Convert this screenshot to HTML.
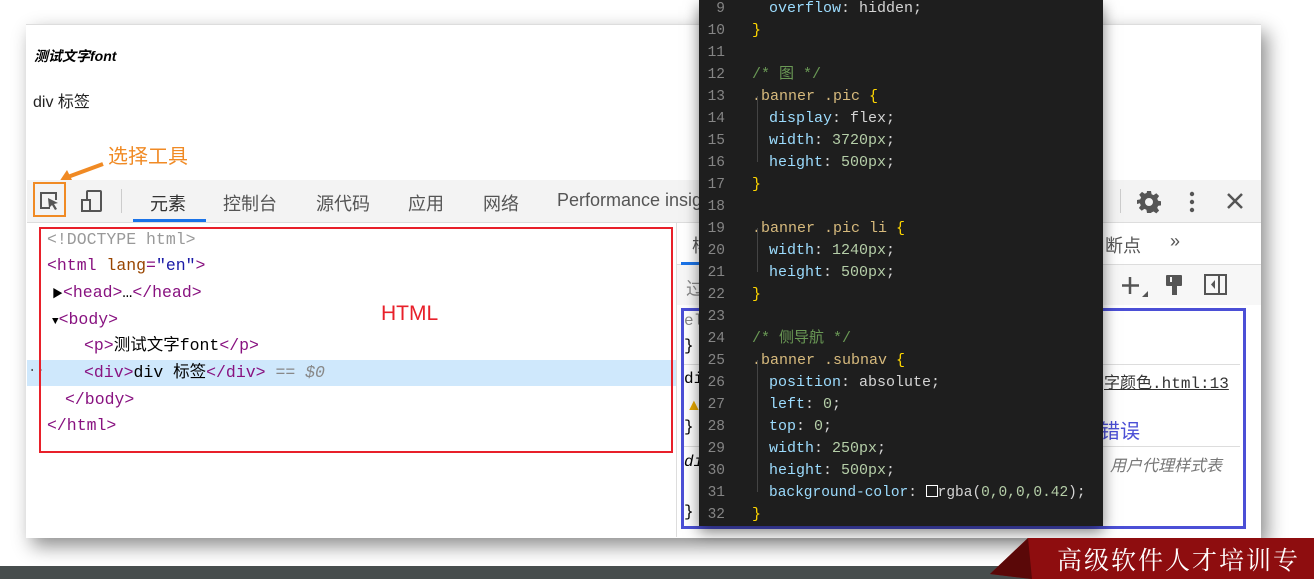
<!DOCTYPE html>
<html><head><meta charset="utf-8"><style>
body{margin:0;width:1314px;height:579px;position:relative;overflow:hidden;background:#fff;font-family:"Liberation Sans","Noto Sans CJK SC",sans-serif}
.a{position:absolute}
.win{left:26px;top:24px;width:1235px;height:513px;background:#fff;box-shadow:6px 8px 18px rgba(0,0,0,.45);border-top:1px solid #ddd}
.mono{font-family:"Liberation Mono","Noto Sans CJK SC",monospace}
.tr{left:47px;font-size:16.5px;white-space:pre;line-height:20px}
.tag{color:#881280}.at{color:#994500}.av{color:#1a1aa6}
.cd{left:699px;top:0;width:404px;height:526px;background:#1e1e1e;box-shadow:0 6px 14px rgba(0,0,0,.5)}
.ln{position:absolute;left:4px;width:22px;text-align:right;color:#858585;font-size:14.5px;line-height:20px}
.cl{position:absolute;left:53px;font-size:15px;line-height:20px;white-space:pre;color:#d4d4d4}
.p{color:#9cdcfe}.s{color:#d7ba7d}.b{color:#ffd700}.c{color:#6a9955}.n{color:#b5cea8}
.tab{top:190px;font-size:18px;color:#555}
</style></head><body>
<div class="a win"></div>
<div class="a" style="left:34px;top:46px;font-size:14px;font-weight:bold;font-style:italic">测试文字font</div>
<div class="a" style="left:33px;top:88px;font-size:16px;color:#222">div 标签</div>
<div class="a" style="left:108px;top:140px;font-size:20px;color:#f08a24">选择工具</div>
<svg class="a" style="left:55px;top:160px" width="55" height="25"><path d="M48 4 L10 18" stroke="#f08a24" stroke-width="4"/><path d="M4 22 L12 10 L18 22Z" fill="#f08a24"/></svg>
<div class="a" style="left:27px;top:180px;width:1234px;height:42px;background:#f3f3f3;border-bottom:1px solid #ddd"></div>
<div class="a" style="left:33px;top:182px;width:33px;height:35px;border:2px solid #f08a24;box-sizing:border-box"></div>
<svg class="a" style="left:38px;top:190px" width="24" height="24"><path d="M12 18H3V3h15v7" stroke="#555" stroke-width="2" fill="none"/><path d="M10 8l10 5-4 1 3 5-2 1-3-5-3 3z" fill="#555"/></svg>
<svg class="a" style="left:80px;top:189px" width="24" height="26"><rect x="7" y="2" width="14" height="20" rx="1" stroke="#555" stroke-width="2" fill="none"/><rect x="2" y="11" width="8" height="11" stroke="#555" stroke-width="2" fill="#f3f3f3"/></svg>
<div class="a" style="left:121px;top:189px;width:1px;height:24px;background:#ccc"></div>
<div class="a tab" style="left:150px;color:#333">元素</div>
<div class="a" style="left:133px;top:219px;width:73px;height:3px;background:#1a73e8"></div>
<div class="a tab" style="left:223px">控制台</div>
<div class="a tab" style="left:316px">源代码</div>
<div class="a tab" style="left:408px">应用</div>
<div class="a tab" style="left:483px">网络</div>
<div class="a tab" style="left:557px">Performance insig</div>
<div class="a" style="left:1120px;top:189px;width:1px;height:24px;background:#ccc"></div>
<svg class="a" style="left:1137px;top:190px" width="24" height="24" viewBox="0 0 24 24"><path fill="#555" d="M10 1h4l.6 3.2 2 .9 2.7-1.9 2.8 2.8-1.9 2.7.9 2 3.2.6v4l-3.2.6-.9 2 1.9 2.7-2.8 2.8-2.7-1.9-2 .9L14 23h-4l-.6-3.2-2-.9-2.7 1.9-2.8-2.8 1.9-2.7-.9-2L0 14v-4l3.2-.6.9-2L2.2 4.7l2.8-2.8 2.7 1.9 2-.9zM12 8a4 4 0 100 8 4 4 0 100-8z"/></svg>
<svg class="a" style="left:1188px;top:190px" width="8" height="24"><circle cx="4" cy="4" r="2.2" fill="#555"/><circle cx="4" cy="12" r="2.2" fill="#555"/><circle cx="4" cy="20" r="2.2" fill="#555"/></svg>
<svg class="a" style="left:1226px;top:192px" width="18" height="18"><path d="M2 2L16 16M16 2L2 16" stroke="#555" stroke-width="2.5"/></svg>
<div class="a" style="left:676px;top:223px;width:1px;height:314px;background:#ddd"></div>
<div class="a" style="left:677px;top:264px;width:584px;height:1px;background:#ddd"></div>
<div class="a" style="left:677px;top:265px;width:584px;height:40px;background:#f7f7f7"></div>
<div class="a" style="left:681px;top:262px;width:20px;height:3px;background:#1a73e8"></div>
<div class="a" style="left:692px;top:232px;font-size:18px;color:#555">样</div>
<div class="a" style="left:686px;top:275px;font-size:18px;color:#888">过</div>
<div class="a" style="left:1105px;top:232px;font-size:18px;color:#555">断点</div>
<div class="a" style="left:1170px;top:231px;font-size:18px;color:#555">»</div>
<svg class="a" style="left:1120px;top:275px" width="30" height="24"><path d="M10 2v17M2 10.5h17" stroke="#555" stroke-width="2.5"/><path d="M28 16v6h-6z" fill="#555"/></svg>
<svg class="a" style="left:1164px;top:274px" width="22" height="24"><rect x="2" y="1" width="16" height="11" rx="1" fill="#555"/><rect x="6" y="3" width="2" height="5" fill="#f7f7f7"/><rect x="8" y="12" width="5" height="9" fill="#555"/></svg>
<svg class="a" style="left:1204px;top:274px" width="24" height="22"><rect x="1" y="1" width="21" height="19" stroke="#555" stroke-width="2" fill="none"/><path d="M15 1v19" stroke="#555" stroke-width="2"/><path d="M11 6v9l-4-4.5z" fill="#555"/></svg>
<div class="a" style="left:681px;top:308px;width:559px;height:215px;border:3px solid #4b4fd6"></div>
<div class="a" style="left:684px;top:364px;width:556px;height:1px;background:#ddd"></div>
<div class="a" style="left:684px;top:446px;width:556px;height:1px;background:#ddd"></div>
<div class="a mono" style="left:684px;top:312px;font-size:16px;color:#888">el</div>
<div class="a mono" style="left:684px;top:337px;font-size:16px">}</div>
<div class="a mono" style="left:684px;top:370px;font-size:16px">di</div>
<div class="a" style="left:686px;top:397px;font-size:16px;color:#e8a800">▲</div>
<div class="a mono" style="left:684px;top:418px;font-size:16px">}</div>
<div class="a mono" style="left:684px;top:453px;font-size:16px;font-style:italic">di</div>
<div class="a mono" style="left:684px;top:503px;font-size:16px">}</div>
<div class="a" style="left:1104px;top:369px;font-size:16px;color:#333;text-decoration:underline;white-space:nowrap">字颜色<span class="mono">.html:13</span></div>
<div class="a" style="left:1100px;top:415px;font-size:20px;color:#4b4fd6">错误</div>
<div class="a" style="left:1110px;top:452px;font-size:16px;color:#777;font-style:italic">用户代理样式表</div>
<div class="a" style="left:27px;top:360px;width:649px;height:26px;background:#cfe8fc"></div>
<div class="a mono tr" style="top:230px;color:#999">&lt;!DOCTYPE html&gt;</div>
<div class="a mono tr" style="top:256px"><span class="tag">&lt;html</span> <span class="at">lang</span><span class="tag">=</span><span class="av">"en"</span><span class="tag">&gt;</span></div>
<div class="a mono tr" style="top:283px;left:52px"><span style="font-size:11px">▶</span><span class="tag">&lt;head&gt;</span>…<span class="tag">&lt;/head&gt;</span></div>
<div class="a mono tr" style="top:310px;left:52px"><span style="font-size:11px">▼</span><span class="tag">&lt;body&gt;</span></div>
<div class="a mono tr" style="top:336px;left:84px"><span class="tag">&lt;p&gt;</span>测试文字font<span class="tag">&lt;/p&gt;</span></div>
<div class="a mono tr" style="top:363px;left:84px"><span class="tag">&lt;div&gt;</span>div 标签<span class="tag">&lt;/div&gt;</span> <span style="color:#888;font-style:italic">== $0</span></div>
<div class="a mono" style="left:28px;top:363px;font-size:14px;color:#555">··</div>
<div class="a mono tr" style="top:390px;left:65px"><span class="tag">&lt;/body&gt;</span></div>
<div class="a mono tr" style="top:416px"><span class="tag">&lt;/html&gt;</span></div>
<div class="a" style="left:39px;top:227px;width:630px;height:222px;border:2px solid #e8202a"></div>
<div class="a" style="left:381px;top:302px;font-size:21px;color:#e8202a">HTML</div>
<div class="a cd mono">
<div class="ln" style="top:-1px">9</div><div class="cl" style="left:70px;top:-1px"><span class="p">overflow</span>: hidden;</div>
<div class="ln" style="top:21px">10</div><div class="cl" style="top:21px"><span class="b">}</span></div>
<div class="ln" style="top:43px">11</div>
<div class="ln" style="top:65px">12</div><div class="cl c" style="top:65px">/* 图 */</div>
<div class="ln" style="top:87px">13</div><div class="cl s" style="top:87px">.banner .pic <span class="b">{</span></div>
<div class="ln" style="top:109px">14</div><div class="cl" style="left:70px;top:109px"><span class="p">display</span>: flex;</div>
<div class="ln" style="top:131px">15</div><div class="cl" style="left:70px;top:131px"><span class="p">width</span>: <span class="n">3720px</span>;</div>
<div class="ln" style="top:153px">16</div><div class="cl" style="left:70px;top:153px"><span class="p">height</span>: <span class="n">500px</span>;</div>
<div class="ln" style="top:175px">17</div><div class="cl" style="top:175px"><span class="b">}</span></div>
<div class="ln" style="top:197px">18</div>
<div class="ln" style="top:219px">19</div><div class="cl s" style="top:219px">.banner .pic li <span class="b">{</span></div>
<div class="ln" style="top:241px">20</div><div class="cl" style="left:70px;top:241px"><span class="p">width</span>: <span class="n">1240px</span>;</div>
<div class="ln" style="top:263px">21</div><div class="cl" style="left:70px;top:263px"><span class="p">height</span>: <span class="n">500px</span>;</div>
<div class="ln" style="top:285px">22</div><div class="cl" style="top:285px"><span class="b">}</span></div>
<div class="ln" style="top:307px">23</div>
<div class="ln" style="top:329px">24</div><div class="cl c" style="top:329px">/* 侧导航 */</div>
<div class="ln" style="top:351px">25</div><div class="cl s" style="top:351px">.banner .subnav <span class="b">{</span></div>
<div class="ln" style="top:373px">26</div><div class="cl" style="left:70px;top:373px"><span class="p">position</span>: absolute;</div>
<div class="ln" style="top:395px">27</div><div class="cl" style="left:70px;top:395px"><span class="p">left</span>: <span class="n">0</span>;</div>
<div class="ln" style="top:417px">28</div><div class="cl" style="left:70px;top:417px"><span class="p">top</span>: <span class="n">0</span>;</div>
<div class="ln" style="top:439px">29</div><div class="cl" style="left:70px;top:439px"><span class="p">width</span>: <span class="n">250px</span>;</div>
<div class="ln" style="top:461px">30</div><div class="cl" style="left:70px;top:461px"><span class="p">height</span>: <span class="n">500px</span>;</div>
<div class="ln" style="top:483px">31</div><div class="cl" style="left:70px;top:483px;font-size:14.5px"><span class="p">background-color</span>: <span style="display:inline-block;width:10px;height:10px;border:1px solid #fff;vertical-align:-1px"></span>rgba(<span class="n">0,0,0,0.42</span>);</div>
<div class="ln" style="top:505px">32</div><div class="cl" style="top:505px"><span class="b">}</span></div>
<div style="position:absolute;left:58px;top:96px;width:1px;height:66px;background:#444"></div>
<div style="position:absolute;left:58px;top:228px;width:1px;height:44px;background:#444"></div>
<div style="position:absolute;left:58px;top:360px;width:1px;height:132px;background:#444"></div>
</div>
<div class="a" style="left:0;top:566px;width:1314px;height:13px;background:#474d4d"></div>
<svg class="a" style="left:990px;top:538px" width="324" height="41"><path d="M0 36 L38 0 H324 V41 H42 Z" fill="#8e0d0f"/><path d="M0 36 L38 0 L42 41 Z" fill="#5a0808"/></svg>
<div class="a" style="left:1057px;top:541px;font-size:25px;color:#fff;font-family:'Noto Serif CJK SC',serif;white-space:nowrap;letter-spacing:2px">高级软件人才培训专</div>
</body></html>
